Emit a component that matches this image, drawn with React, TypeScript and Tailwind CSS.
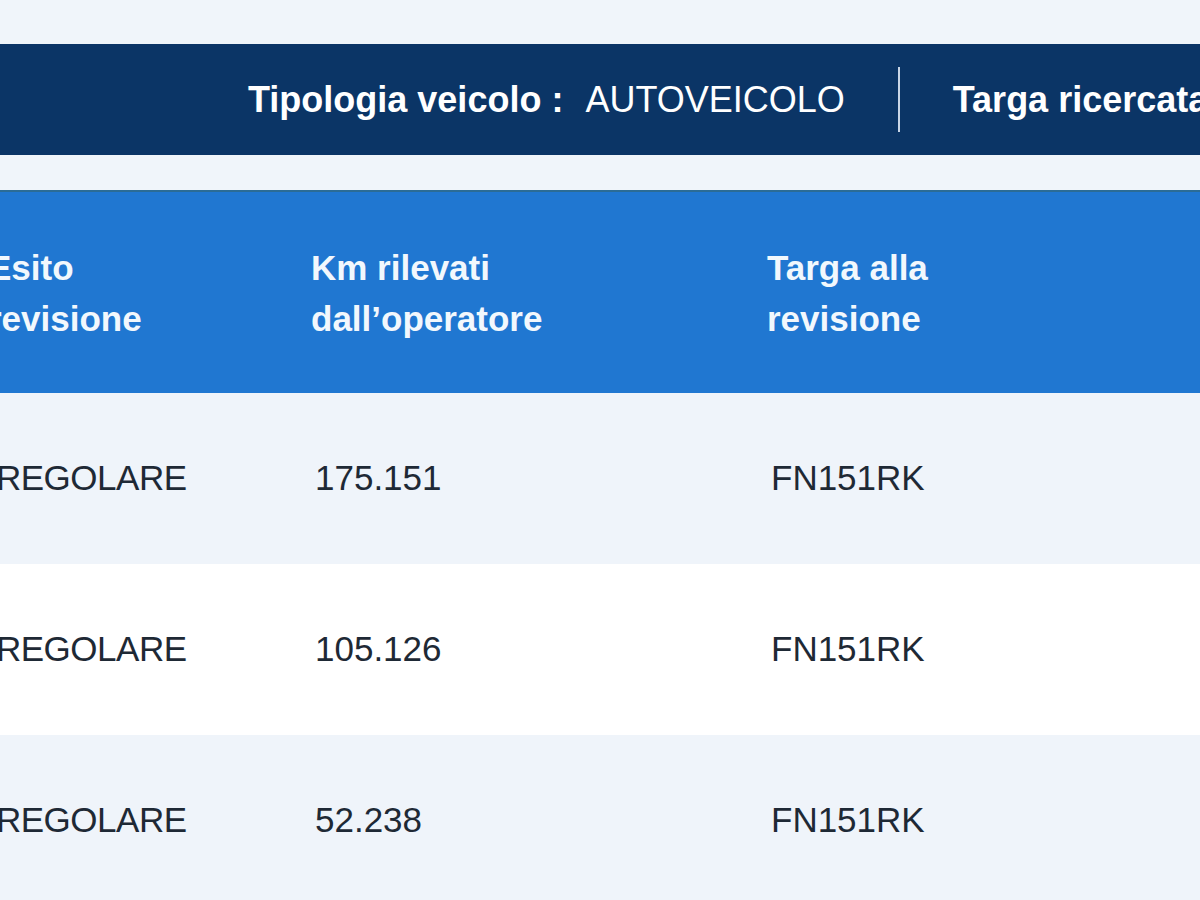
const rows = [
  { esito: 'REGOLARE', km: '175.151', targa: 'FN151RK' },
  { esito: 'REGOLARE', km: '105.126', targa: 'FN151RK' },
  { esito: 'REGOLARE', km: '52.238', targa: 'FN151RK' },
];

const font = { fontFamily: '"Liberation Sans", Arial, sans-serif' };

export default function App() {
  return (
    <div className="w-[1200px] h-[900px] overflow-hidden bg-[#f0f5fa]" style={font}>
      <div className="h-[44px]" />

      {/* Vehicle summary band */}
      <div className="h-[111px] bg-[#0b3566] flex items-center pl-[248px] text-white text-[36px] whitespace-nowrap overflow-hidden">
        <span className="font-bold">Tipologia veicolo :</span>
        <span className="ml-[22px]">AUTOVEICOLO</span>
        <span className="ml-[53px] mr-[53px] w-[2px] h-[65px] bg-[#c9d6e6] shrink-0" />
        <span className="font-bold">Targa ricercata :</span>
        <span className="ml-[22px]">FN151RK</span>
      </div>

      <div className="h-[35px]" />

      {/* Revisions table */}
      <div className="-ml-[12px]">
        <div className="grid grid-cols-[323px_456px_1fr] h-[203px] items-center bg-[#2077d1] border-t-2 border-[#2b6c96] text-[#f2f8fd] font-bold text-[35px] leading-[51px]">
          <div>
            Esito
            <br />
            revisione
          </div>
          <div>
            Km rilevati
            <br />
            dall’operatore
          </div>
          <div>
            Targa alla
            <br />
            revisione
          </div>
        </div>
        {rows.map((r, i) => (
          <div
            key={i}
            className={`grid grid-cols-[323px_456px_1fr] h-[171px] items-center text-[35px] text-[#1e2935] ${
              i % 2 === 1 ? 'bg-white' : 'bg-[#eff4fa]'
            }`}
          >
            <div className="pl-[8px] tracking-[-0.5px]">{r.esito}</div>
            <div className="pl-[4px]">{r.km}</div>
            <div className="pl-[4px]">{r.targa}</div>
          </div>
        ))}
      </div>
    </div>
  );
}
